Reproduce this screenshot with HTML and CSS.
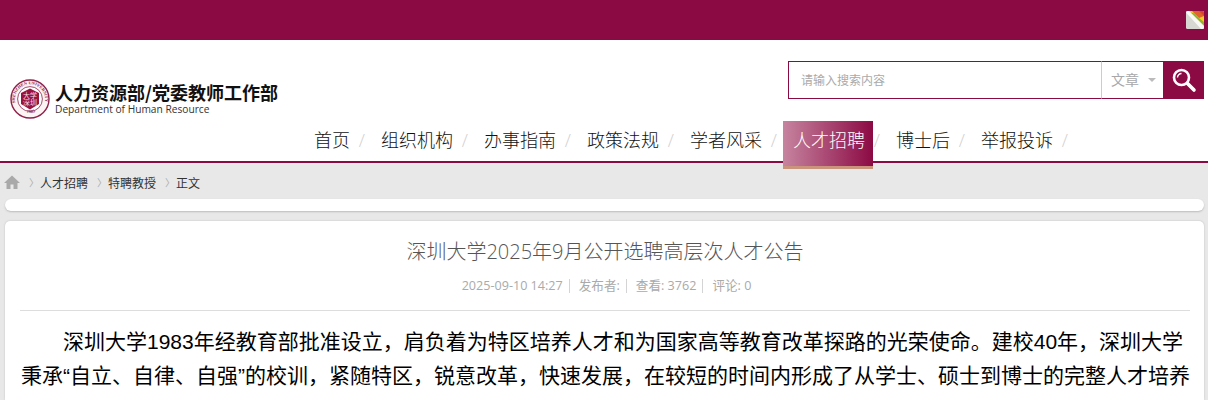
FILE: index.html
```html
<!DOCTYPE html>
<html lang="zh-CN">
<head>
  <meta charset="UTF-8" />
  <title>深圳大学2025年9月公开选聘高层次人才公告</title>
  <link rel="stylesheet" href="styles.css">
</head>
<body>

  <div class="topbar">
    <svg class="skin-icon" width="18" height="18" viewBox="0 0 18 18">
      <rect width="18" height="18" rx="1.5" fill="#d8d8d2"/>
      <path d="M3 0H16.5Q18 0 18 1.5V15Z" fill="#f2d01e"/>
      <path d="M3 0H16.5Q18 0 18 1.5V5L13 7L6 0Z" fill="#e2622c"/>
      <path d="M13 0H16.5Q18 0 18 1.5V5Z" fill="#d8452c"/>
      <path d="M4.5 1.5L9 2.5L11 5.5L18 11V15Z" fill="#8fb436"/>
      <path d="M0 1.5Q0 0 1.5 0H3L18 15V16.5Q18 18 16.5 18H15Z" fill="#f8f8f6"/>
    </svg>
  </div>

  <div class="header">
    <div class="logo">
      <svg class="seal" width="40" height="40" viewBox="0 0 40 40">
        <defs>
          <path id="seal-top" d="M5.2 24A15.2 15.2 0 1 1 34.8 24"/>
          <path id="seal-bottom" d="M9 29A14.6 14.6 0 0 0 31 29"/>
        </defs>
        <circle cx="20" cy="20" r="19" fill="#fbf3f4" stroke="#8f2048" stroke-width="1.4"/>
        <circle cx="20" cy="20" r="12.4" fill="#fff" stroke="#8f2048" stroke-width="0.8"/>
        <text class="seal-ring"><textPath href="#seal-top">SHENZHEN UNIVERSITY</textPath></text>
        <text class="seal-ring"><textPath href="#seal-bottom" startOffset="36%">1983</textPath></text>
        <path d="M20 9.5L29 14V25L20 30.5L11 25V14Z" fill="#98143f"/>
        <text class="seal-mark" x="20" y="18.5" text-anchor="middle">大学</text>
        <text class="seal-mark" x="20" y="26" text-anchor="middle">深圳</text>
      </svg>
      <div class="logo-text">
        <div class="logo-cn">人力资源部/党委教师工作部</div>
        <div class="logo-en">Department of Human Resource</div>
      </div>
    </div>
    <div class="header-right">
      <div class="search">
        <div class="search-input">请输入搜索内容</div>
        <div class="search-type">文章<span class="caret"></span></div>
        <div class="search-btn">
          <svg width="26" height="26" viewBox="0 0 26 26" fill="none" stroke="#fff">
            <circle cx="10.5" cy="10.5" r="7.5" stroke-width="2.6"/>
            <path d="M6.5 10.5a4 4 0 0 1 4-4" stroke-width="1.4"/>
            <path d="M16.5 16.5L23 23" stroke-width="3.6" stroke-linecap="round"/>
          </svg>
        </div>
      </div>
      <ul class="nav">
        <li>首页</li>
        <li>组织机构</li>
        <li>办事指南</li>
        <li>政策法规</li>
        <li>学者风采</li>
        <li class="active">人才招聘</li>
        <li>博士后</li>
        <li>举报投诉</li>
      </ul>
    </div>
  </div>

  <div class="main">
    <div class="crumbs">
      <svg width="16" height="14" viewBox="0 0 16 14" fill="#a9a9a9">
        <path d="M8 0.5L0 8H2.5V14H6.5V9.5H9.5V14H13.5V8H16Z"/>
      </svg>
      <span class="sep">〉</span><span>人才招聘</span>
      <span class="sep">〉</span><span>特聘教授</span>
      <span class="sep">〉</span><span>正文</span>
    </div>
    <div class="slim-bar"></div>
    <div class="article">
      <h1>深圳大学2025年9月公开选聘高层次人才公告</h1>
      <div class="meta">
        <span>2025-09-10 14:27</span><span>发布者:</span><span>查看: 3762</span><span class="last">评论: 0</span>
      </div>
      <p>深圳大学1983年经教育部批准设立，肩负着为特区培养人才和为国家高等教育改革探路的光荣使命。建校40年，深圳大学秉承“自立、自律、自强”的校训，紧随特区，锐意改革，快速发展，在较短的时间内形成了从学士、硕士到博士的完整人才培养</p>
    </div>
  </div>

</body>
</html>
```

FILE: styles.css
```css
* {
  box-sizing: border-box;
  margin: 0;
  padding: 0;
}

html, body {
  height: 400px;
  overflow: hidden;
}

body {
  background: #fff;
  color: #333;
  font-family: "Open Sans", "Noto Sans CJK SC", sans-serif;
}

.topbar {
  height: 40px;
  background: #8c0a44;
  display: flex;
  justify-content: flex-end;
  align-items: center;
  padding-right: 4px;
}

.skin-icon {
  margin-top: -1px;
}

.header {
  height: 123px;
  display: flex;
  justify-content: space-between;
  border-bottom: 2px solid #8c0a44;
}

.logo {
  display: flex;
  align-items: center;
  gap: 5px;
  padding: 8px 0 0 10px;
  height: 110px;
}

.seal-ring {
  font-family: "Liberation Serif", serif;
  font-size: 4.4px;
  font-weight: 700;
  fill: #8f2048;
}

.seal-mark {
  font-family: "Noto Sans CJK SC", sans-serif;
  font-size: 7px;
  fill: #f3d9e0;
}

.logo-cn {
  font-family: "Noto Sans CJK SC", sans-serif;
  font-size: 18px;
  font-weight: 700;
  line-height: 21px;
  color: #111;
  white-space: nowrap;
}

.logo-en {
  font-size: 10.2px;
  line-height: 13px;
  color: #333;
}

.header-right {
  display: flex;
  flex-direction: column;
  align-items: flex-end;
  padding-top: 21px;
}

.search {
  width: 416px;
  height: 38px;
  display: flex;
  margin-right: 4px;
}

.search-input {
  flex: 1;
  border: 1px solid #8c0a44;
  border-right: 1px solid #ccc;
  padding-left: 12px;
  font-size: 12px;
  line-height: 37px;
  color: #aaa;
}

.search-type {
  width: 61px;
  border-top: 1px solid #8c0a44;
  border-bottom: 1px solid #8c0a44;
  padding-left: 9px;
  font-size: 14px;
  line-height: 36px;
  color: #a8a8a8;
  display: flex;
  align-items: center;
}

.caret {
  margin-left: 9px;
  border-top: 4px solid #bbb;
  border-left: 4px solid transparent;
  border-right: 4px solid transparent;
}

.search-btn {
  width: 41px;
  background: #8c0a44;
  display: flex;
  align-items: center;
  justify-content: center;
}

.nav {
  list-style: none;
  display: flex;
  height: 48px;
  margin-top: 22px;
  margin-right: 134px;
}

.nav li {
  position: relative;
  height: 48px;
  padding: 0 8px 0 10px;
  margin-right: 13px;
  font-size: 18px;
  font-weight: 300;
  line-height: 38px;
  color: #111;
  white-space: nowrap;
}

.nav li::after {
  content: "/";
  position: absolute;
  right: -7px;
  top: 0;
  color: #d0d0d0;
  font-weight: 300;
}

.nav .active {
  color: #fff;
  background: linear-gradient(to right, #c6849f, #8c0a44);
  border-bottom: 3px solid #c9937c;
}

.main {
  height: 237px;
  background: #e8e8e8;
  padding: 0 4px 0 5px;
}

.crumbs {
  height: 36px;
  padding-top: 2px;
  margin-left: -1px;
  display: flex;
  align-items: center;
  font-family: "Noto Sans CJK SC", sans-serif;
  font-size: 12px;
  color: #333;
}

.sep {
  width: 20px;
  padding-left: 9px;
  font-size: 10px;
  color: #aaa;
}

.slim-bar {
  height: 12px;
  background: #fff;
  border-radius: 6px;
  box-shadow: 0 1px 2px #bbb;
}

.article {
  margin-top: 10px;
  height: 179px;
  background: #fff;
  border-radius: 5px 5px 0 0;
  box-shadow: 0 0 2px #bbb;
  padding: 0 14px 0 15px;
  overflow: hidden;
}

h1 {
  font-size: 20px;
  font-weight: 300;
  line-height: 28px;
  padding-top: 17px;
  box-sizing: content-box;
  text-align: center;
  color: #555;
}

.meta {
  margin-top: 10px;
  height: 35px;
  border-bottom: 1px solid #ddd;
  display: flex;
  justify-content: center;
  font-size: 12.6px;
  line-height: 20px;
  color: #aaa;
}

.meta span {
  padding: 0 6px 0 9px;
  border-right: 1px solid #d4d4d4;
  height: 14px;
  line-height: 14px;
  margin-top: 3px;
}

.meta .last {
  border-right: none;
}

.article p {
  margin-top: 14px;
  margin-left: 1px;
  font-family: "Liberation Sans", "Noto Sans CJK SC", sans-serif;
  font-size: 21px;
  line-height: 34px;
  text-indent: 2em;
  color: #000;
}
```
